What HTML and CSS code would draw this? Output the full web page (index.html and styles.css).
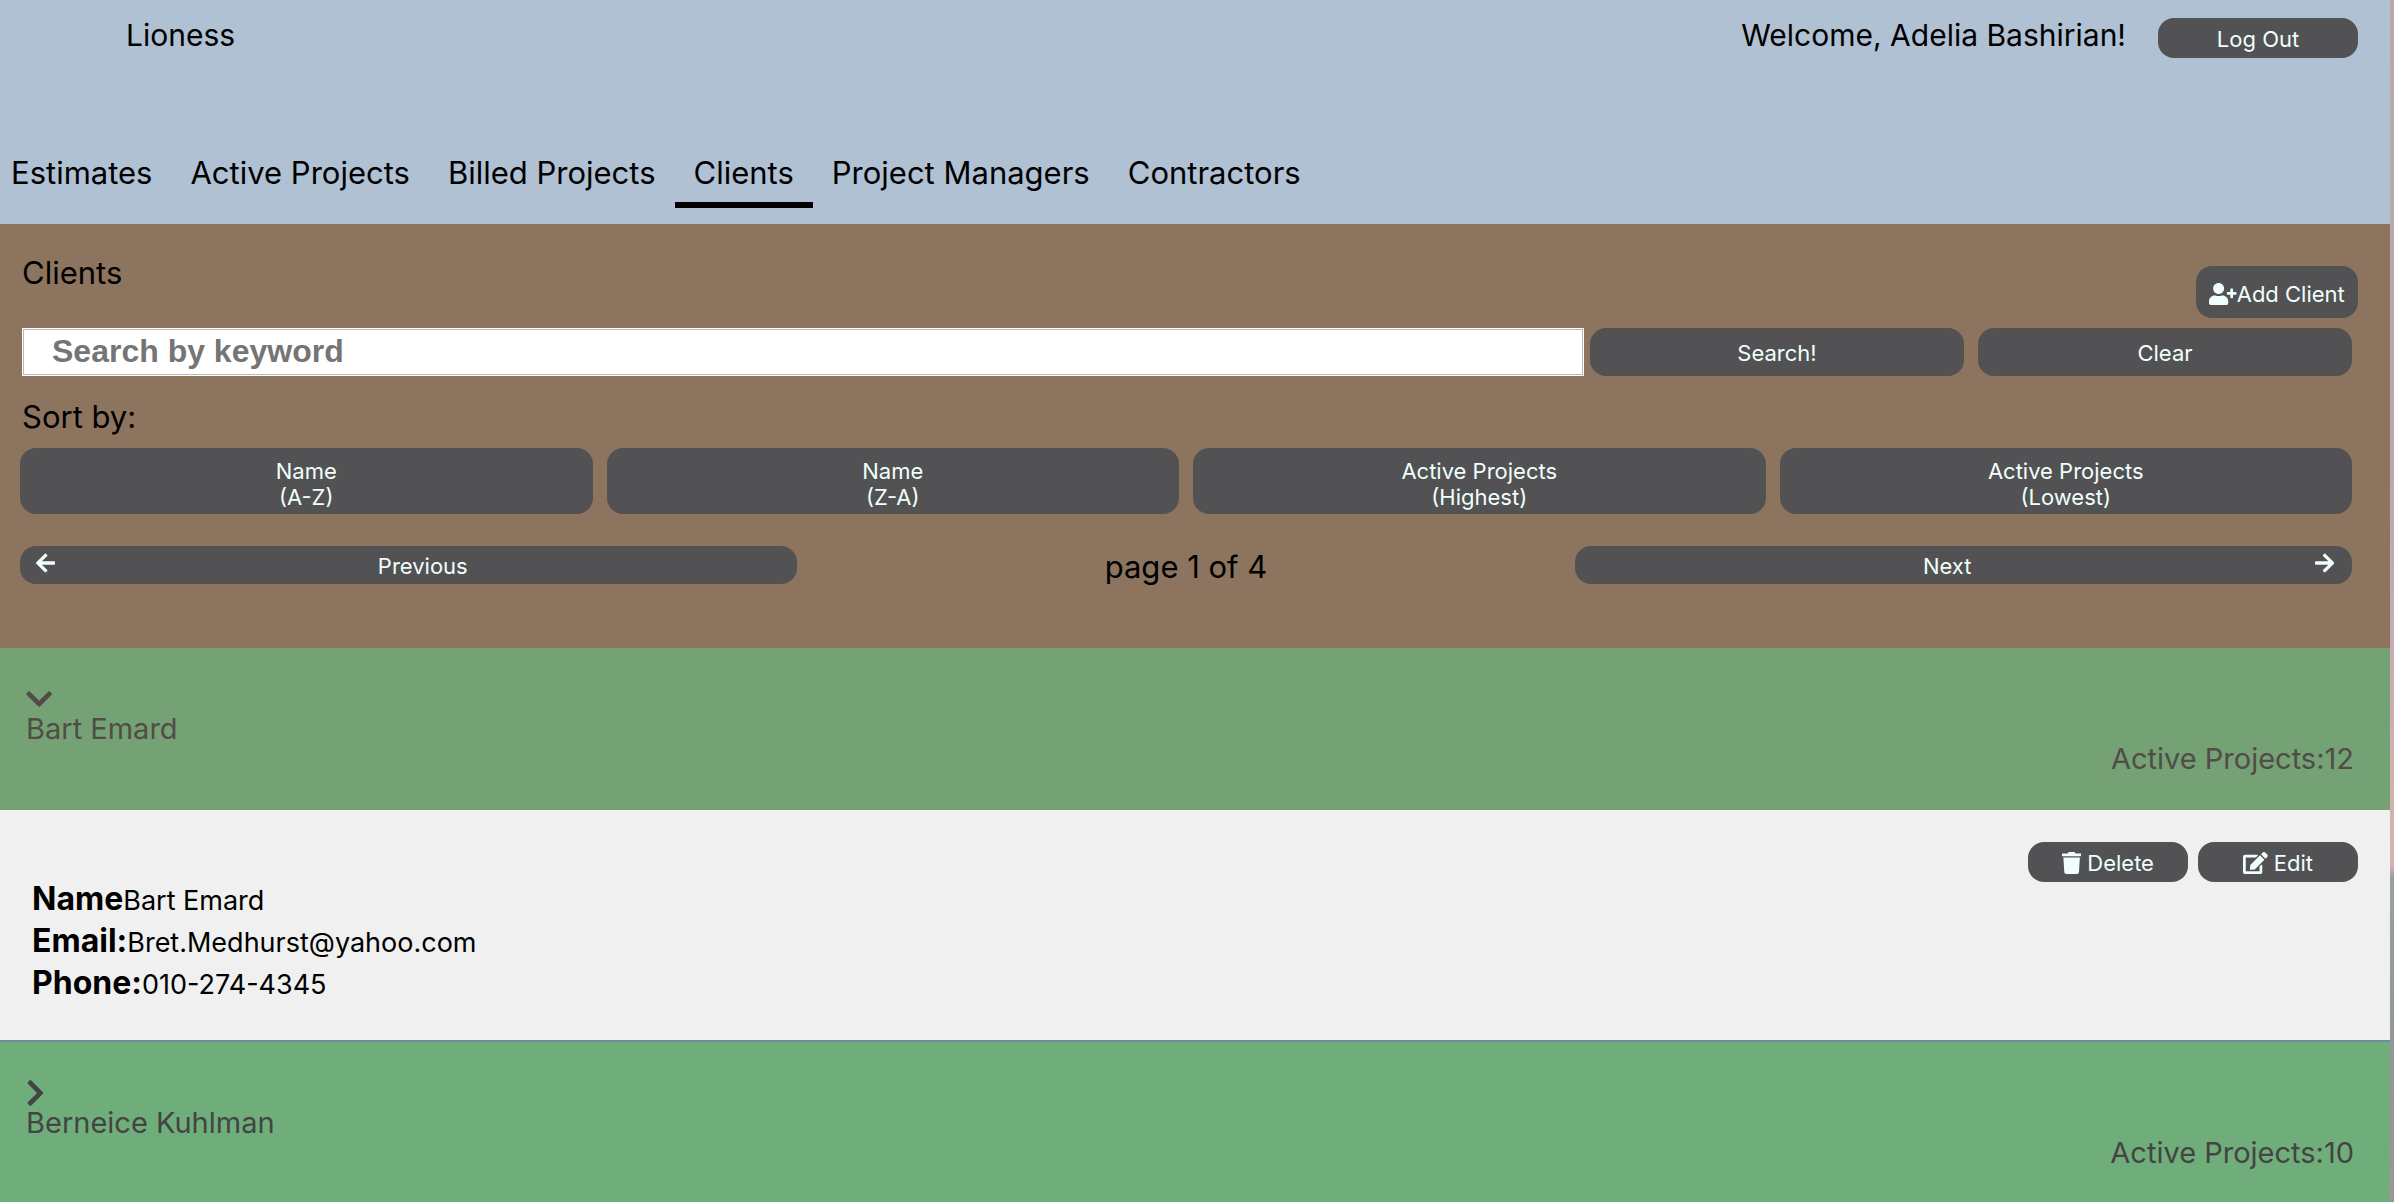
FILE: index.html
```html
<!DOCTYPE html>
<html lang="en">
<head>
<meta charset="utf-8">
<title>Lioness</title>
<link rel="stylesheet" href="styles.css">
</head>
<body>
<div class="app">
  <header class="header">
    <div class="topbar">
      <div class="brand">Lioness</div>
      <div class="session">
        <span>Welcome, Adelia Bashirian!</span>
        <button class="btn btn-logout" type="button">Log Out</button>
      </div>
    </div>
    <nav class="nav">
      <a href="#estimates">Estimates</a>
      <a href="#active">Active Projects</a>
      <a href="#billed">Billed Projects</a>
      <a href="#clients" class="active" aria-current="page">Clients</a>
      <a href="#managers">Project Managers</a>
      <a href="#contractors">Contractors</a>
    </nav>
  </header>

  <section class="controls">
    <div class="title-row">
      <h1>Clients</h1>
      <button class="btn btn-add" type="button"><svg class="icon" viewBox="0 0 640 512" aria-hidden="true"><path d="M624 208h-64v-64c0-8.800-7.200-16-16-16h-32c-8.800 0-16 7.200-16 16v64h-64c-8.800 0-16 7.200-16 16v32c0 8.800 7.200 16 16 16h64v64c0 8.800 7.200 16 16 16h32c8.800 0 16-7.200 16-16v-64h64c8.800 0 16-7.200 16-16v-32c0-8.800-7.200-16-16-16zm-400 48c70.700 0 128-57.300 128-128S294.700 0 224 0 96 57.300 96 128s57.300 128 128 128zm89.600 32h-16.700c-22.200 10.200-46.900 16-72.900 16s-50.600-5.800-72.900-16h-16.700C60.200 288 0 348.200 0 422.400V464c0 26.500 21.500 48 48 48h352c26.500 0 48-21.500 48-48v-41.600c0-74.200-60.200-134.400-134.400-134.400z"/></svg>Add Client</button>
    </div>
    <form class="search" onsubmit="return false">
      <input class="search-input" type="text" placeholder="Search by keyword" aria-label="Search by keyword">
      <div class="search-actions">
        <button class="btn" type="submit">Search!</button>
        <button class="btn" type="reset">Clear</button>
      </div>
    </form>
    <p class="sort-label">Sort by:</p>
    <div class="sort">
      <button class="btn" type="button">Name<br>(A-Z)</button>
      <button class="btn" type="button">Name<br>(Z-A)</button>
      <button class="btn" type="button">Active Projects<br>(Highest)</button>
      <button class="btn" type="button">Active Projects<br>(Lowest)</button>
    </div>
    <div class="pager">
      <button class="btn" type="button"><svg class="icon" viewBox="0 0 448 512" aria-hidden="true"><path d="M257.500 445.100l-22.200 22.200c-9.400 9.400-24.600 9.400-33.900 0L7 273c-9.400-9.400-9.400-24.600 0-33.900L201.400 44.700c9.400-9.400 24.600-9.400 33.900 0l22.200 22.200c9.500 9.500 9.300 25-.4 34.300L136.600 216H424c13.300 0 24 10.700 24 24v32c0 13.300-10.700 24-24 24H136.600l120.500 114.800c9.800 9.300 10 24.800.4 34.300z"/></svg><span>Previous</span></button>
      <p>page 1 of 4</p>
      <button class="btn" type="button"><span>Next</span><svg class="icon" viewBox="0 0 448 512" aria-hidden="true"><path d="M190.500 66.900l22.200-22.200c9.400-9.400 24.600-9.400 33.900 0L441 239c9.400 9.400 9.400 24.600 0 33.900L246.600 467.300c-9.400 9.400-24.600 9.400-33.900 0l-22.200-22.200c-9.500-9.500-9.300-25 .4-34.300L311.400 296H24c-13.300 0-24-10.700-24-24v-32c0-13.300 10.700-24 24-24h287.400L190.900 101.200c-9.800-9.300-10-24.800-.4-34.300z"/></svg></button>
    </div>
  </section>

  <main>
    <button class="client open" type="button" aria-expanded="true">
      <svg class="chevron" viewBox="0 0 448 512" aria-hidden="true"><path d="M207.029 381.476L12.686 187.132c-9.373-9.373-9.373-24.569 0-33.941l22.667-22.667c9.357-9.357 24.522-9.375 33.901-.04L224 284.505l154.745-154.021c9.379-9.335 24.544-9.317 33.901.04l22.667 22.667c9.373 9.373 9.373 24.569 0 33.941L240.971 381.476c-9.373 9.372-24.569 9.372-33.942 0z"/></svg>
      <span class="client-name">Bart Emard</span>
      <span class="client-count">Active Projects:12</span>
    </button>
    <div class="details">
      <div class="details-actions">
        <button class="btn" type="button"><svg class="icon" viewBox="0 0 448 512" aria-hidden="true"><path d="M432 32H312l-9.400-18.700A24 24 0 0 0 281.100 0H166.800a23.720 23.720 0 0 0-21.400 13.300L136 32H16A16 16 0 0 0 0 48v32a16 16 0 0 0 16 16h416a16 16 0 0 0 16-16V48a16 16 0 0 0-16-16zM53.200 467a48 48 0 0 0 47.900 45h245.800a48 48 0 0 0 47.900-45L416 128H32z"/></svg>Delete</button>
        <button class="btn" type="button"><svg class="icon" viewBox="0 0 576 512" aria-hidden="true"><path d="M402.600 83.200l90.200 90.200c3.800 3.800 3.800 10 0 13.800L274.400 405.600l-92.800 10.300c-12.400 1.400-22.900-9.100-21.500-21.500l10.300-92.800L388.800 83.200c3.800-3.800 10-3.800 13.800 0zm162-22.900l-48.800-48.800c-15.200-15.200-39.900-15.200-55.200 0l-35.400 35.400c-3.800 3.800-3.800 10 0 13.800l90.200 90.200c3.800 3.800 10 3.800 13.800 0l35.400-35.400c15.200-15.300 15.200-40 0-55.200zM384 346.200V448H64V128h229.800c3.200 0 6.200-1.300 8.500-3.500l40-40c7.600-7.600 2.200-20.500-8.500-20.500H48C21.500 64 0 85.500 0 112v352c0 26.500 21.500 48 48 48h352c26.500 0 48-21.500 48-48V306.200c0-10.700-12.900-16-20.500-8.500l-40 40c-2.200 2.300-3.500 5.300-3.500 8.500z"/></svg>Edit</button>
      </div>
      <dl>
        <div><dt>Name</dt><dd>Bart Emard</dd></div>
        <div><dt>Email:</dt><dd>Bret.Medhurst@yahoo.com</dd></div>
        <div><dt>Phone:</dt><dd>010-274-4345</dd></div>
      </dl>
    </div>
    <button class="client" type="button" aria-expanded="false">
      <svg class="chevron" viewBox="0 0 320 512" aria-hidden="true"><path d="M285.476 272.971L91.132 467.314c-9.373 9.373-24.569 9.373-33.941 0l-22.667-22.667c-9.357-9.357-9.375-24.522-.04-33.901L188.505 256 34.484 101.255c-9.335-9.379-9.317-24.544.04-33.901l22.667-22.667c9.373-9.373 24.569-9.373 33.941 0L285.475 239.030c9.373 9.372 9.373 24.568.001 33.941z"/></svg>
      <span class="client-name">Berneice Kuhlman</span>
      <span class="client-count">Active Projects:10</span>
    </button>
  </main>
</div>
</body>
</html>
```
FILE: styles.css
```css
* {
  box-sizing: border-box;
}

body {
  margin: 0;
  background: linear-gradient(#b8a8a8 0%, #b8aab0 40%, #ccb0b0 60%, #d2b4ac 72%, #98a0a0 73%, #909898 85%, #a09494 100%);
  color: #000;
  font-family: Inter, "Liberation Sans", sans-serif;
  font-size: 31px;
  line-height: 38px;
}

h1,
p,
dl,
dd {
  margin: 0;
  font-size: inherit;
  font-weight: 400;
}

.app {
  margin-right: 4px;
}

.btn {
  display: flex;
  align-items: center;
  justify-content: center;
  padding: 1px 0 0;
  border: 0;
  border-radius: 16px;
  background: #525254;
  color: #f0fffb;
  font: 22px/26px Inter, "Liberation Sans", sans-serif;
}

.icon {
  height: 22px;
  fill: currentColor;
}

.header {
  background: #b0c1d4;
}

.topbar {
  display: flex;
  justify-content: space-between;
  height: 154px;
  padding: 16px 32px 0 126px;
  font-size: 30px;
}

.session {
  display: flex;
  align-items: flex-start;
  gap: 32px;
}

.btn-logout {
  width: 200px;
  height: 40px;
  margin-top: 2px;
}

.nav {
  display: flex;
  height: 70px;
  margin-left: -8px;
}

.nav a {
  height: 54px;
  padding: 0 19px;
  color: inherit;
  text-decoration: none;
}

.nav .active {
  border-bottom: 6px solid #000;
}

.controls {
  padding: 30px 38px 64px 20px;
  background: #8c745e;
}

.title-row {
  display: flex;
  justify-content: space-between;
  height: 74px;
  padding-left: 2px;
}

.btn-add {
  width: 162px;
  height: 52px;
  margin: 12px -6px 0 0;
  padding-top: 4px;
}

.search {
  display: grid;
  grid-template-columns: 1564fr 762fr;
  gap: 6px;
  height: 48px;
}

.search-input {
  min-width: 0;
  margin-left: 2px;
  padding: 0 29px 2px;
  border: 1px solid #fff;
  box-shadow: inset 0 0 0 1px #b8b8be;
  background: #fff;
  color: #000;
  font: bold 32px "Liberation Sans", Arial, sans-serif;
}

.search-input::placeholder {
  color: #757575;
}

.search-actions,
.sort {
  display: grid;
  grid-auto-flow: column;
  grid-auto-columns: 1fr;
  gap: 14px;
}

.sort-label {
  margin: 22px 0 12px 2px;
}

.sort .btn {
  padding: 9px 0 4px;
}

.sort {
  height: 66px;
}

.pager {
  display: grid;
  grid-template-columns: repeat(3, 1fr);
  height: 38px;
  margin-top: 32px;
  line-height: 42px;
  text-align: center;
}

.pager .btn {
  align-items: flex-start;
  gap: 11px;
  height: 38px;
  padding: 6px 18px 0 16px;
  line-height: 28px;
}

.pager span {
  flex: 1;
}

.client {
  display: flex;
  flex-direction: column;
  align-items: flex-start;
  width: 100%;
  height: 162px;
  padding: 36px 36px 0 26px;
  border: 0;
  border-top: 2px solid #75889f;
  background: #6fae7a;
  color: #444;
  font: 29px/30px Inter, "Liberation Sans", sans-serif;
}

.client.open {
  border-top: 0;
  background: #74a274;
  color: #524c48;
}

.chevron {
  height: 30px;
  fill: currentColor;
}

.client-count {
  align-self: flex-end;
}

.details {
  height: 230px;
  padding: 32px 32px 0;
  background: #f0f0f0;
}

.details-actions {
  display: flex;
  justify-content: flex-end;
  gap: 10px;
}

.details-actions .btn {
  gap: 6px;
  width: 160px;
  height: 40px;
}

.details dl {
  display: grid;
  gap: 8px;
}

.details dl > div {
  display: flex;
  align-items: baseline;
}

.details dt {
  font-size: 32px;
  font-weight: 700;
  line-height: 34px;
}

.details dd {
  font-size: 27px;
  line-height: 28px;
}
```
